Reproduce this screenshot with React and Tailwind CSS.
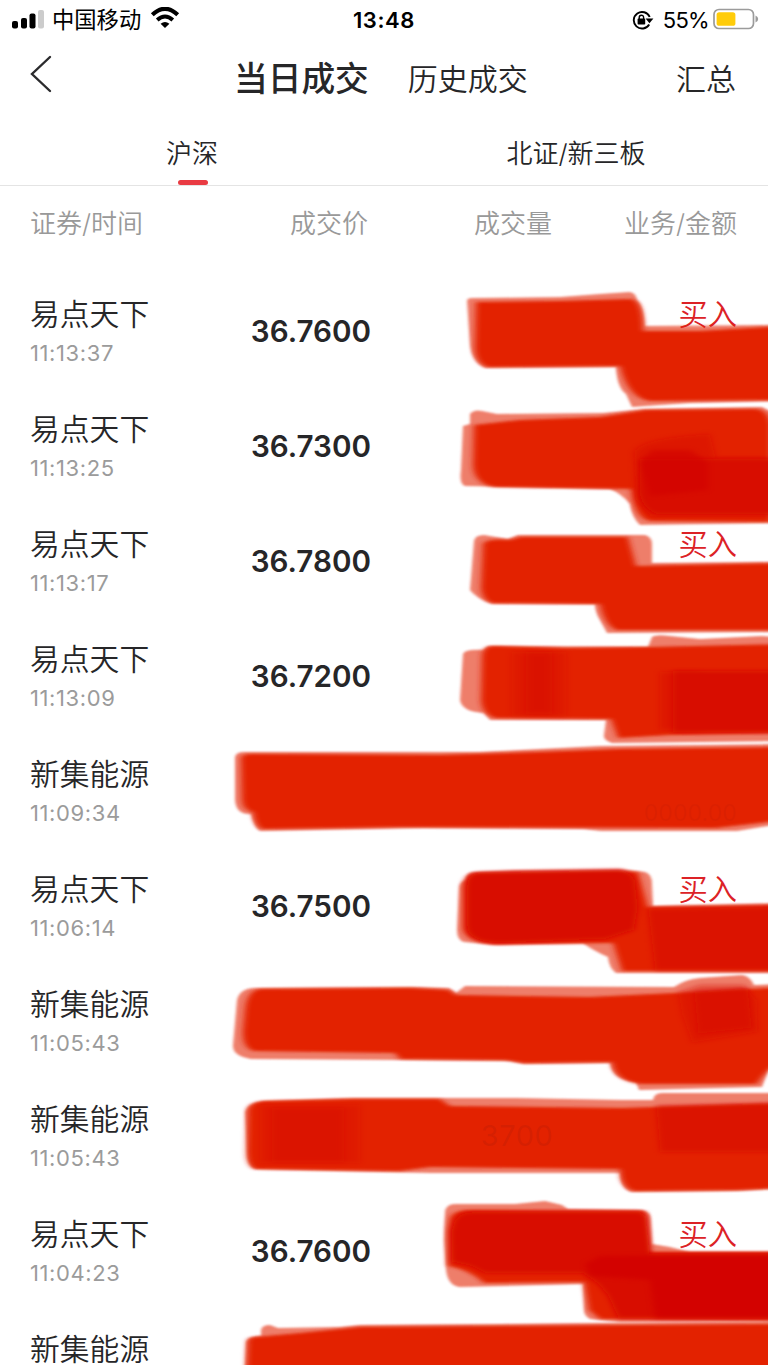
const trades = [
  { name: "易点天下", time: "11:13:37", price: "36.7600", side: "买入" },
  { name: "易点天下", time: "11:13:25", price: "36.7300" },
  { name: "易点天下", time: "11:13:17", price: "36.7800", side: "买入" },
  { name: "易点天下", time: "11:13:09", price: "36.7200" },
  { name: "新集能源", time: "11:09:34" },
  { name: "易点天下", time: "11:06:14", price: "36.7500", side: "买入" },
  { name: "新集能源", time: "11:05:43" },
  { name: "新集能源", time: "11:05:43" },
  { name: "易点天下", time: "11:04:23", price: "36.7600", side: "买入" },
  { name: "新集能源" },
];

const RED = "#e32402";
const DARK = "#d80700";
const DEEP = "#d20000";

// Marker strokes: soft outer edge first, then the solid body, then overlaps
const edges = [
  "M467 301Q467 298 472 298L560 297L600 294L630 292Q636 293 637 300Q644 306 645 326L785 325V401L690 403L632 407L626 394Q617 388 616 367L485 368Q472 362 470 345Z",
  "M470 414Q474 409 482 411L497 414L603 413L645 409L762 407L772 412V523L640 525Q632 518 630 504Q622 494 610 489L465 486Q459 484 461 470L463 426L470 424Z",
  "M474 541Q475 535 484 535L508 539L518 535L645 535Q652 537 652 544V563L785 562V632L607 633L600 620Q595 612 595 604L492 604Q476 598 470 590Z",
  "M463 654Q465 649 483 650L488 646L648 647L652 637Q656 634 670 636L700 639L762 636L785 638V741L612 743Q603 740 604 735L606 720L490 720L484 713Q462 712 460 700Z",
  "M235 757Q236 752 244 752L480 752L540 749L600 746L785 744V822L768 826L737 831L601 831L583 829L423 828L260 831Q254 828 251 814Q236 815 235 800Z",
  "M459 888Q459 882 466 880Q466 872 474 872L515 870L620 869L645 872Q652 874 652 884L653 906L785 903V973L616 973Q609 968 608 957Q592 950 583 943L495 945L464 942Q457 940 457 930Z",
  "M233 1045L237 1000Q240 988 255 988L412 987L449 988L456 993L465 986L674 987Q686 979 700 978L742 975Q750 976 754 985L785 984V1060L768 1070L762 1087L639 1090L636 1082Q612 1080 610 1063L524 1064L510 1061L398 1060L251 1059Q232 1056 233 1045Z",
  "M245 1112Q248 1102 265 1101L353 1098L517 1098L622 1100L653 1100Q654 1093 662 1093H785V1188L737 1191L631 1192Q620 1188 620 1173H430L335 1171L255 1169Q247 1166 247 1152Z",
  "M445 1212Q446 1204 455 1204L515 1204L545 1201L562 1205L568 1209L642 1210Q651 1212 651 1220L652 1244L670 1247L690 1252H785V1321L620 1322L590 1319Q584 1316 584 1310L583 1284L460 1287Q448 1286 446 1270L444 1240Z",
  "M261 1330Q262 1325 270 1325L278 1328L340 1327L360 1325L500 1324L785 1321V1385H244L246 1342Q248 1336 261 1336Z",
];

const bodies = [
  "M476 302L560 301L632 299Q643 302 643 331L700 331L785 326V400L650 401Q628 398 620 366L487 367Q474 362 475 345Z",
  "M474 425L520 420L600 417L645 410L756 409Q768 410 771 424V522L650 521Q634 518 631 489L495 487Q474 484 473 465Z",
  "M483 544Q486 538 510 540L520 537L628 537L636 566L785 563V630L616 630Q604 624 600 604L492 603Q482 600 481 588Z",
  "M482 656Q483 646 493 646L565 648L650 647L785 644V733L670 735L618 738L611 719L495 718Q482 714 481 700Z",
  "M241 758Q242 754 250 754L440 755L540 752L620 749L785 747V820L716 828L400 827L262 829Q255 826 253 812Q243 810 242 800Z",
  "M463 888Q464 873 478 873L638 872L648 907L785 905V971L622 971L613 943L495 944Q465 942 463 928Z",
  "M245 1010Q247 989 262 989L410 988L449 990L456 995L590 997L674 993L785 987V1060Q768 1066 757 1084L640 1084Q614 1080 612 1062L524 1063L505 1060L400 1059L395 1053L254 1051Q242 1048 243 1030Z",
  "M248 1110Q250 1102 265 1101L353 1099L440 1099L450 1106L622 1108L785 1103V1188L737 1190L634 1191Q621 1188 620 1169L430 1167L400 1171L255 1169Q247 1166 247 1152Z",
  "M450 1218Q454 1210 470 1210L645 1211L650 1252H785V1320L600 1319L589 1310L584 1282L484 1283Q470 1270 448 1266L448 1230Z",
  "M248 1341Q249 1337 256 1337L300 1333L360 1327L500 1326L785 1324V1385H246Z",
];

const overlaps = [
  { fill: DARK, opacity: 0.5, d: "M634 452Q640 438 710 434L716 458H768V516H650L636 500Z" },
  { fill: DARK, opacity: 1, d: "M640 459H785V514L656 514Q640 508 639 490Z" },
  { fill: DEEP, opacity: 0.6, d: "M640 462L652 450L690 450L708 462V490L650 496Z" },
  { fill: DARK, opacity: 0.4, d: "M512 652H566V716H512Z" },
  { fill: DARK, opacity: 0.5, d: "M526 652H552V714H526Z" },
  { fill: DARK, opacity: 0.5, d: "M660 672H700V730H660Z" },
  { fill: DARK, opacity: 1, d: "M673 671H785V732H673Z" },
  { fill: DARK, opacity: 1, d: "M467 885Q467 874 478 873L620 870Q632 872 635 880L638 908L634 930L606 939L500 943Q466 942 467 925Z" },
  { fill: DARK, opacity: 0.7, d: "M648 909L785 907V970L655 970Z" },
  { fill: DARK, opacity: 0.45, d: "M678 992L700 985L744 985L757 1000L758 1032L692 1043L682 1015Z" },
  { fill: DARK, opacity: 0.6, d: "M694 992L748 988L752 1028L698 1034Z" },
  { fill: DARK, opacity: 0.35, d: "M260 1105H360V1163H260Z" },
  { fill: DARK, opacity: 0.45, d: "M272 1108H344V1162H272Z" },
  { fill: DARK, opacity: 0.65, d: "M656 1106L785 1103V1152H660Z" },
  { fill: DARK, opacity: 1, d: "M454 1222Q458 1212 472 1212L640 1212L646 1216L650 1254L785 1254V1318H618L608 1296L598 1284L582 1273L485 1273L470 1266L452 1262L451 1232Z" },
  { fill: DEEP, opacity: 0.8, d: "M585 1264L600 1256L785 1255V1318H655L650 1280L590 1276Z" },
];

function StatusBar() {
  return (
    <div className="relative flex h-10 shrink-0 items-center justify-between pl-3 pr-[10px] text-black">
      <div className="flex items-center">
        <svg width="32" height="20" viewBox="0 0 32 20">
          <rect x="0" y="11" width="6" height="7.5" rx="2" />
          <rect x="9" y="8" width="6" height="10.5" rx="2" />
          <rect x="17.5" y="3.5" width="6" height="15" rx="2" />
          <rect x="26" y="0" width="6" height="18.5" rx="2" fill="#cccccc" />
        </svg>
        <span className="ml-2 text-[22.3px] leading-none">中国移动</span>
        <svg className="-mt-[3px] ml-[9px]" width="30" height="22" viewBox="0 0 30 22">
          <path d="M2.3 7.8Q15-4.2 27.7 7.8" fill="none" stroke="#000" strokeWidth="4.1" />
          <path d="M7.2 13Q15 6 22.8 13" fill="none" stroke="#000" strokeWidth="3.9" />
          <path d="M10.6 16.7Q15 13.2 19.4 16.7L15 21Z" />
        </svg>
      </div>

      <div className="absolute inset-x-0 top-0 flex h-10 items-center justify-center text-[22px] font-semibold tracking-[0.6px]">
        13:48
      </div>

      <div className="flex items-center">
        <svg width="22" height="20" viewBox="0 0 22 20">
          <path d="M17.2 14.5A8.3 8.3 0 1 1 17.7 7" fill="none" stroke="#000" strokeWidth="1.9" />
          <path d="M13.6 8.5H21.4L17.5 13.2Z" />
          <rect x="5.6" y="8.6" width="7.6" height="6" rx="0.8" />
          <path d="M7.2 9V7.4A2.2 2.2 0 0 1 11.6 7.4V9" fill="none" stroke="#000" strokeWidth="1.4" />
        </svg>
        <span className="ml-[9px] text-[22px] leading-none tracking-[-0.7px]">55%</span>
        <svg className="-mr-px -mt-0.5 ml-1" width="46" height="22" viewBox="0 0 46 22">
          <rect x="1" y="1.5" width="39.5" height="19" rx="5" fill="none" stroke="#9b9b9b" strokeWidth="1.7" />
          <rect x="3.6" y="4.2" width="18.8" height="13.6" rx="2.6" fill="#ffcc0a" />
          <path d="M42.5 7.4Q45.2 8.5 45.2 11T42.5 14.6Z" fill="#9b9b9b" />
        </svg>
      </div>
    </div>
  );
}

function NavBar() {
  return (
    <div className="relative flex h-[78px] shrink-0 items-center justify-between pl-[30px] pr-8 text-[#262628]">
      <svg className="-mt-[10px]" width="24" height="38" viewBox="0 0 24 38">
        <path d="M20 2L2 19L20 36" fill="none" stroke="#2b2b2d" strokeWidth="2.4" strokeLinecap="round" />
      </svg>
      <div className="absolute inset-y-0 left-[234px] flex items-center gap-[39px]">
        <span className="text-[33.7px] font-medium">当日成交</span>
        <span className="text-[30px] font-[350]">历史成交</span>
      </div>
      <span className="text-[30px] font-[350]">汇总</span>
    </div>
  );
}

function Tabs() {
  return (
    <div className="flex h-[68px] shrink-0 border-b border-[#e4e4e4] text-[26px] font-[350] text-[#262628]">
      <div className="relative flex w-1/2 items-center justify-center pt-[3px]">
        沪深
        <span className="absolute bottom-0 left-[178px] h-[5px] w-[30px] rounded-full bg-[#e93b43]" />
      </div>
      <div className="flex w-1/2 items-center justify-center pt-[3px]">北证/新三板</div>
    </div>
  );
}

function TradeRow({ name, time, price, side }) {
  return (
    <div className="flex h-[115px] shrink-0 pl-[30px] pr-[31px]">
      <div className="w-[170px] pt-[22px]">
        <div className="text-[29.8px] font-[350] leading-9 text-[#262628]">{name}</div>
        <div className="mt-[7px] text-[22px] leading-7 tracking-[0.6px] text-[#9b9b9b]">{time}</div>
      </div>
      <div className="flex w-[171px] items-center justify-end text-[29.6px] font-semibold text-[#262628]">{price}</div>
      <div className="flex-1 pt-[23px] text-right text-[29.3px] font-[350] leading-9 text-[#dc2226]">{side}</div>
    </div>
  );
}

function MarkerLayer() {
  return (
    <svg className="pointer-events-none absolute left-0 top-0" width="768" height="1365" viewBox="0 0 768 1365">
      <defs>
        <filter id="edge" x="-5%" y="-10%" width="110%" height="120%">
          <feGaussianBlur stdDeviation="1.8 1.3" />
        </filter>
        <filter id="body" x="-5%" y="-10%" width="110%" height="120%">
          <feGaussianBlur stdDeviation="3 1.4" />
        </filter>
        <filter id="blend" x="-20%" y="-20%" width="140%" height="140%">
          <feGaussianBlur stdDeviation="3.2 2" />
        </filter>
      </defs>
      {edges.map((d) => (
        <path key={d} d={d} fill={RED} opacity="0.58" filter="url(#edge)" />
      ))}
      {bodies.map((d) => (
        <path key={d} d={d} fill={RED} filter="url(#body)" />
      ))}
      {overlaps.map((s) => (
        <path key={s.d} d={s.d} fill={s.fill} opacity={s.opacity} filter="url(#blend)" />
      ))}
      <text x="481" y="1146" fontSize="29" textLength="72" fill="#cf1f04" opacity="0.65">3700</text>
      <text x="644" y="821" fontSize="23" textLength="93" fill="#cf1f04" opacity="0.35">0000.00</text>
    </svg>
  );
}

export default function App() {
  return (
    <div className="relative flex h-[1366px] w-[768px] flex-col overflow-hidden bg-white font-[Inter,'Noto_Sans_CJK_SC',sans-serif]">
      <StatusBar />
      <NavBar />
      <Tabs />

      {/* Column titles */}
      <div className="flex h-[88px] shrink-0 pl-[30px] pr-[31px] pt-[18px] text-[26px] font-[350] leading-10 text-[#999999]">
        <span className="w-[170px]">证券/时间</span>
        <span className="w-[168px] text-right">成交价</span>
        <span className="w-[184px] text-right">成交量</span>
        <span className="flex-1 text-right">业务/金额</span>
      </div>

      {trades.map((t, i) => (
        <TradeRow key={i} {...t} />
      ))}
      <MarkerLayer />
    </div>
  );
}
